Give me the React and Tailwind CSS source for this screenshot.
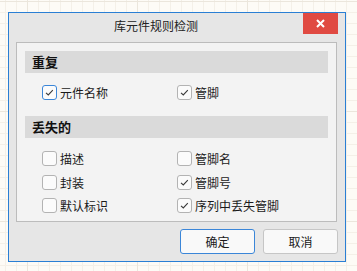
import React from "react";

function Check({ checked, focus }) {
  return (
    <span
      className={
        "w-[15px] h-[15px] rounded-[3px] border bg-[#fbfbfb] flex items-center justify-center shrink-0 " +
        (focus ? "border-[#3b86d8]" : "border-[#b3b3b3]")
      }
    >
      {checked && (
        <svg width="13" height="13" viewBox="0 0 13 13">
          <path d="M3 6.8 L5.3 9 L9.8 4.2" fill="none" stroke="#3a3a3a" strokeWidth="1.1" />
        </svg>
      )}
    </span>
  );
}

function Item({ label, checked, focus }) {
  return (
    <div className="flex items-center gap-[3px] h-[15px]">
      <Check checked={checked} focus={focus} />
      <span className="text-[12px] leading-[15px] text-[#1a1a1a]">{label}</span>
    </div>
  );
}

export default function App() {
  return (
    <div
      className="w-[357px] h-[271px] overflow-hidden bg-[#fdfbf6] bg-[image:linear-gradient(to_right,#ebe6dc_1px,transparent_1px),linear-gradient(to_bottom,#ebe6dc_1px,transparent_1px),linear-gradient(to_right,#f4f0e8_1px,transparent_1px),linear-gradient(to_bottom,#f4f0e8_1px,transparent_1px)] bg-[size:110px_110px,110px_110px,11px_11px,11px_11px] bg-[position:27px_1px] pt-[12px] pl-[8px]"
      style={{ fontFamily: '"Noto Sans CJK SC", "Noto Sans", sans-serif' }}
    >
      <div className="w-[338px] h-[250px] border border-[#2a7fd4] bg-[#e6e6e6] flex flex-col px-[7px]">
        <div className="flex h-[21px]">
          <div className="flex-1 -ml-[7px] text-center text-[12px] leading-[21px] pt-[2px] text-[#222]">
            库元件规则检测
          </div>
          <div className="w-[35px] h-[21px] bg-[#e04a42] flex items-center justify-center">
            <svg width="9" height="9" viewBox="0 0 9 9">
              <path d="M1 1 L8 8 M8 1 L1 8" stroke="#fff" strokeWidth="2" />
            </svg>
          </div>
        </div>
        <div className="mt-[8px] w-[321px] h-[180px] border border-[#bcbcbc] bg-[#f3f3f3] p-[8px] flex flex-col">
          <div className="h-[22px] bg-[#dadada] flex items-center pl-[7px] text-[13px] font-bold text-[#111]">
            重复
          </div>
          <div className="mt-[12px] grid grid-cols-[135px_1fr] pl-[17px]">
            <Item label="元件名称" checked focus />
            <Item label="管脚" checked />
          </div>
          <div className="mt-[16px] h-[22px] bg-[#dadada] flex items-center pl-[7px] text-[13px] font-bold text-[#111]">
            丢失的
          </div>
          <div className="mt-[13px] grid grid-cols-[135px_1fr] gap-y-[8.5px] pl-[17px]">
            <Item label="描述" />
            <Item label="管脚名" />
            <Item label="封装" />
            <Item label="管脚号" checked />
            <Item label="默认标识" />
            <Item label="序列中丢失管脚" checked />
          </div>
        </div>
        <div className="mt-[7px] flex justify-end gap-[8px]">
          <button className="w-[75px] h-[25px] rounded-[3px] border border-[#3b86d8] bg-[#f9f9f9] text-[12px] text-[#1a1a1a]">
            确定
          </button>
          <button className="w-[75px] h-[25px] rounded-[3px] border border-[#c6c6c6] bg-[#f9f9f9] text-[12px] text-[#1a1a1a]">
            取消
          </button>
        </div>
      </div>
    </div>
  );
}
